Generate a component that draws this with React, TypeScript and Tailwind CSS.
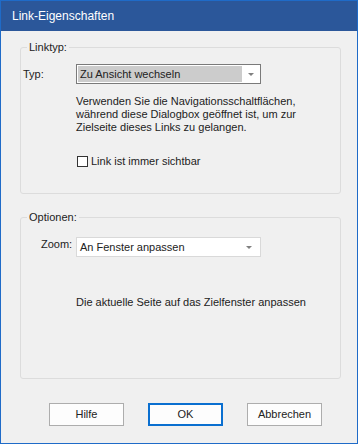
import React from "react";

const Arrow: React.FC = () => (
  <svg width="6" height="3" viewBox="0 0 6 3" className="shrink-0">
    <path d="M0 0h6L3 3z" fill="#808080" />
  </svg>
);

const GroupBox: React.FC<{ label: string; className?: string; children?: React.ReactNode }> = ({
  label,
  className,
  children,
}) => (
  <div className={`relative border border-[#dcdcdc] rounded-[3px] ${className ?? ""}`}>
    <span className="absolute left-[6px] top-[-8px] px-[2px] bg-[#f0f0f0] leading-[14px]">{label}</span>
    {children}
  </div>
);

export default function App() {
  return (
    <div className="w-[358px] h-[444px] bg-[#f0f0f0] border border-[#1f6bc8] flex flex-col font-['Liberation_Sans',Arial,sans-serif] text-[11px] text-[#222]">
      <div className="h-[30px] bg-[#2b579a] flex items-center px-[11px] text-white text-[12px] leading-none">
        Link-Eigenschaften
      </div>

      <div className="pl-[19px] pr-[16px] flex flex-col">
        <GroupBox label="Linktyp:" className="mt-[16px] h-[147px] pt-[16px]">
          <div className="flex items-center">
            <span className="w-[55px] pl-[2px]">Typ:</span>
            <div className="w-[185px] h-[20px] bg-white border border-[#7a7a7a] flex items-center p-[1px]">
              <div className="h-full w-[164px] bg-[#cccccc] flex items-center pl-[2px] leading-none">
                Zu Ansicht wechseln
              </div>
              <div className="flex-1 flex justify-center">
                <Arrow />
              </div>
            </div>
          </div>
          <p className="ml-[55px] mt-[11px] leading-[13px]">
            Verwenden Sie die Navigationsschaltflächen,
            <br />
            während diese Dialogbox geöffnet ist, um zur
            <br />
            Zielseite dieses Links zu gelangen.
          </p>
          <label className="ml-[56px] mt-[21px] flex items-center gap-[3px] leading-[13px]">
            <span className="w-[11px] h-[11px] border border-[#333] bg-white" />
            <span>Link ist immer sichtbar</span>
          </label>
        </GroupBox>

        <GroupBox label="Optionen:" className="mt-[23px] h-[162px] pt-[19px]">
          <div className="flex items-start">
            <span className="w-[55px] pl-[20px] leading-[14px]">Zoom:</span>
            <div className="w-[185px] h-[20px] bg-white border border-[#d9d9d9] flex items-center pl-[3px] pr-[8px] leading-none">
              <span className="flex-1">An Fenster anpassen</span>
              <Arrow />
            </div>
          </div>
          <p className="ml-[55px] mt-[39px] leading-[13px]">
            Die aktuelle Seite auf das Zielfenster anpassen
          </p>
        </GroupBox>
      </div>

      <div className="mt-[24px] pl-[48px] flex gap-[24px]">
        <button className="w-[75px] h-[23px] bg-[#fdfdfd] border border-[#adadad] leading-none">Hilfe</button>
        <button className="w-[75px] h-[23px] bg-[#fdfdfd] border-2 border-[#0a6fd0] leading-none">OK</button>
        <button className="w-[75px] h-[23px] bg-[#fdfdfd] border border-[#adadad] leading-none">Abbrechen</button>
      </div>
    </div>
  );
}
